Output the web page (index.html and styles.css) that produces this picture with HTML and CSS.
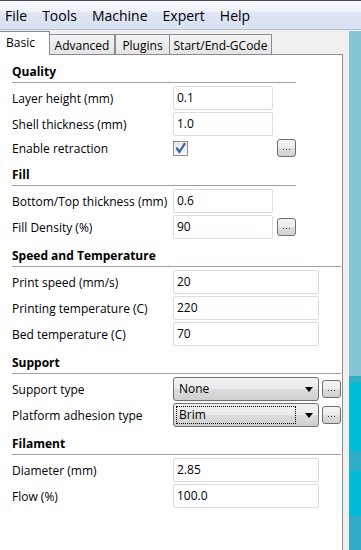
FILE: index.html
```html
<!DOCTYPE html>
<html>
<head>
<meta charset="utf-8">
<link rel="stylesheet" href="styles.css">
</head>
<body>
<div class="menubar">
  <span class="menu">File</span>
  <span class="menu">Tools</span>
  <span class="menu">Machine</span>
  <span class="menu">Expert</span>
  <span class="menu">Help</span>
</div>
<div class="main">
  <div class="left">
    <div class="tabs">
      <div class="tab active t-basic">Basic</div>
      <div class="tab t-adv">Advanced</div>
      <div class="tab t-plug">Plugins</div>
      <div class="tab t-gcode">Start/End-GCode</div>
    </div>
    <div class="panel">
      <section class="sec short">
        <div class="sec-title">Quality</div>
        <div class="rows">
          <div class="row"><span class="lbl">Layer height (mm)</span><span class="field f-short">0.1</span></div>
          <div class="row"><span class="lbl">Shell thickness (mm)</span><span class="field f-short">1.0</span></div>
          <div class="row row-check">
            <span class="lbl">Enable retraction</span>
            <span class="check"><svg width="13" height="13" viewBox="0 0 13 13"><path d="M3 6.5 L5.5 10 L10.5 2" fill="none" stroke="#3a5d9f" stroke-width="2.2" stroke-linecap="round" stroke-linejoin="round"/></svg></span>
            <span class="spacer-short"></span>
            <span class="dots"><span class="dotline"></span></span>
          </div>
        </div>
      </section>
      <section class="sec short">
        <div class="sec-title">Fill</div>
        <div class="rows">
          <div class="row"><span class="lbl">Bottom/Top thickness (mm)</span><span class="field f-short">0.6</span></div>
          <div class="row"><span class="lbl">Fill Density (%)</span><span class="field f-short">90</span><span class="dots"><span class="dotline"></span></span></div>
        </div>
      </section>
      <section class="sec wide">
        <div class="sec-title">Speed and Temperature</div>
        <div class="rows">
          <div class="row"><span class="lbl">Print speed (mm/s)</span><span class="field f-wide">20</span></div>
          <div class="row"><span class="lbl">Printing temperature (C)</span><span class="field f-wide">220</span></div>
          <div class="row"><span class="lbl">Bed temperature (C)</span><span class="field f-wide">70</span></div>
        </div>
      </section>
      <section class="sec wide">
        <div class="sec-title">Support</div>
        <div class="rows">
          <div class="row"><span class="lbl">Support type</span><span class="select"><span class="sel-text">None</span><span class="arrow"></span></span><span class="dots dots-wide"><span class="dotline"></span></span></div>
          <div class="row"><span class="lbl">Platform adhesion type</span><span class="select"><span class="sel-text focus">Brim</span><span class="arrow"></span></span><span class="dots dots-wide"><span class="dotline"></span></span></div>
        </div>
      </section>
      <section class="sec wide">
        <div class="sec-title">Filament</div>
        <div class="rows">
          <div class="row"><span class="lbl">Diameter (mm)</span><span class="field f-wide">2.85</span></div>
          <div class="row"><span class="lbl">Flow (%)</span><span class="field f-wide">100.0</span></div>
        </div>
      </section>
    </div>
  </div>
  <div class="viewport"></div>
</div>
</body>
</html>
```
FILE: styles.css
```css
* { box-sizing: border-box; }
html, body { margin: 0; padding: 0; }
body {
  width: 361px;
  height: 550px;
  overflow: hidden;
  background: #f0f0f0;
  font-family: "Open Sans", "Noto Sans", sans-serif;
  font-size: 12px;
  color: #000;
}
.menubar {
  height: 30px;
  display: flex;
  align-items: center;
  padding-left: 5px;
  border-top: 1px solid #3f4b5b;
  border-bottom: 1px solid #b3bdd0;
  background: linear-gradient(to bottom, #f9fbfe 0%, #eef2f9 35%, #dde5f3 45%, #d9e2f2 100%);
  font-size: 14px;
}
.menu { margin-right: 15px; line-height: 18px; padding-top: 1px; }
.main { display: flex; height: 520px; }
.left { width: 349px; background: #f0f0f0; display: flex; flex-direction: column; }
.tabs {
  width: 343px;
  height: 25px;
  display: flex;
  align-items: flex-end;
  border-bottom: 1px solid #898c95;
}
.tab {
  height: 20px;
  border-top: 1px solid #898c95;
  border-right: 1px solid #898c95;
  background: linear-gradient(to bottom, #f4f4f4, #e4e4e4);
  text-align: center;
  line-height: 19px;
  padding-top: 1px;
}
.tab.active {
  height: 24px;
  background: #fff;
  margin-bottom: -1px;
  text-align: left;
  padding-left: 6px;
}
.t-basic { width: 50px; }
.t-adv { width: 65px; }
.t-plug { width: 55px; border-left: 1px solid #898c95; }
.t-gcode { width: 102px; }
.panel {
  width: 343px;
  flex: 1;
  background: #fff;
  border-right: 1px solid #8c8c8c;
  padding-left: 12px;
}
.sec.short { width: 284px; }
.sec.wide { width: 329px; }
.sec-title {
  height: 28px;
  border-bottom: 1px solid #a0a0a0;
  font-weight: bold;
  display: flex;
  align-items: flex-end;
  line-height: 16px;
  padding-bottom: 2px;
}
.rows { padding-top: 3px; display: flex; flex-direction: column; gap: 2px; }
.row { height: 24px; display: flex; align-items: center; }
.row-check { height: 20px; }
.lbl { width: 161px; flex: none; white-space: nowrap; }
.field {
  height: 24px;
  border: 1px solid #d6dde5;
  border-radius: 2px;
  padding-left: 3px;
  line-height: 21px;
  background: #fff;
}
.f-short { width: 100px; }
.f-wide { width: 146px; }
.check {
  width: 15px;
  height: 15px;
  border: 1px solid #8e8f8f;
  background: linear-gradient(to bottom, #e6e6e6, #f8f8f8);
  display: flex;
  align-items: center;
  justify-content: center;
}
.spacer-short { width: 85px; }
.dots {
  width: 19px;
  height: 18px;
  margin-left: 4px;
  border: 1px solid #707070;
  border-radius: 3px;
  background: linear-gradient(to bottom, #f4f4f4 0%, #ececec 50%, #dedede 51%, #d2d2d2 100%);
  display: flex;
  align-items: center;
  justify-content: center;
}
.dotline {
  width: 7px;
  height: 1px;
  margin-top: 2px;
  background: repeating-linear-gradient(to right, #3a3a3a 0px, #3a3a3a 1px, transparent 1px, transparent 3px);
}
.dots-wide { margin-left: 3px; }
.select {
  width: 146px;
  height: 24px;
  border: 1px solid #707070;
  border-radius: 3px;
  background: linear-gradient(to bottom, #f2f2f2 0%, #ebebeb 50%, #dddddd 51%, #d0d0d0 100%);
  display: flex;
  align-items: center;
  padding: 2px;
}
.sel-text {
  width: 120px;
  height: 18px;
  line-height: 16px;
  padding-left: 2px;
  border: 1px solid transparent;
}
.sel-text.focus { border: 1px dotted #000; }
.arrow {
  margin-left: 9px;
  width: 0;
  height: 0;
  border-left: 4px solid transparent;
  border-right: 4px solid transparent;
  border-top: 5px solid #000;
}
.viewport {
  flex: 1;
  margin-top: 1px;
  background: linear-gradient(to bottom,
    #86c5d5 0px, #86c5d5 345px,
    #30afc6 345px, #30afc6 352px,
    #00bcd9 352px, #00bcd9 420px,
    #2fadc7 420px, #2fadc7 440px,
    #00bad8 440px, #00bad8 485px,
    #31abc3 485px, #31abc3 520px);
}
```
